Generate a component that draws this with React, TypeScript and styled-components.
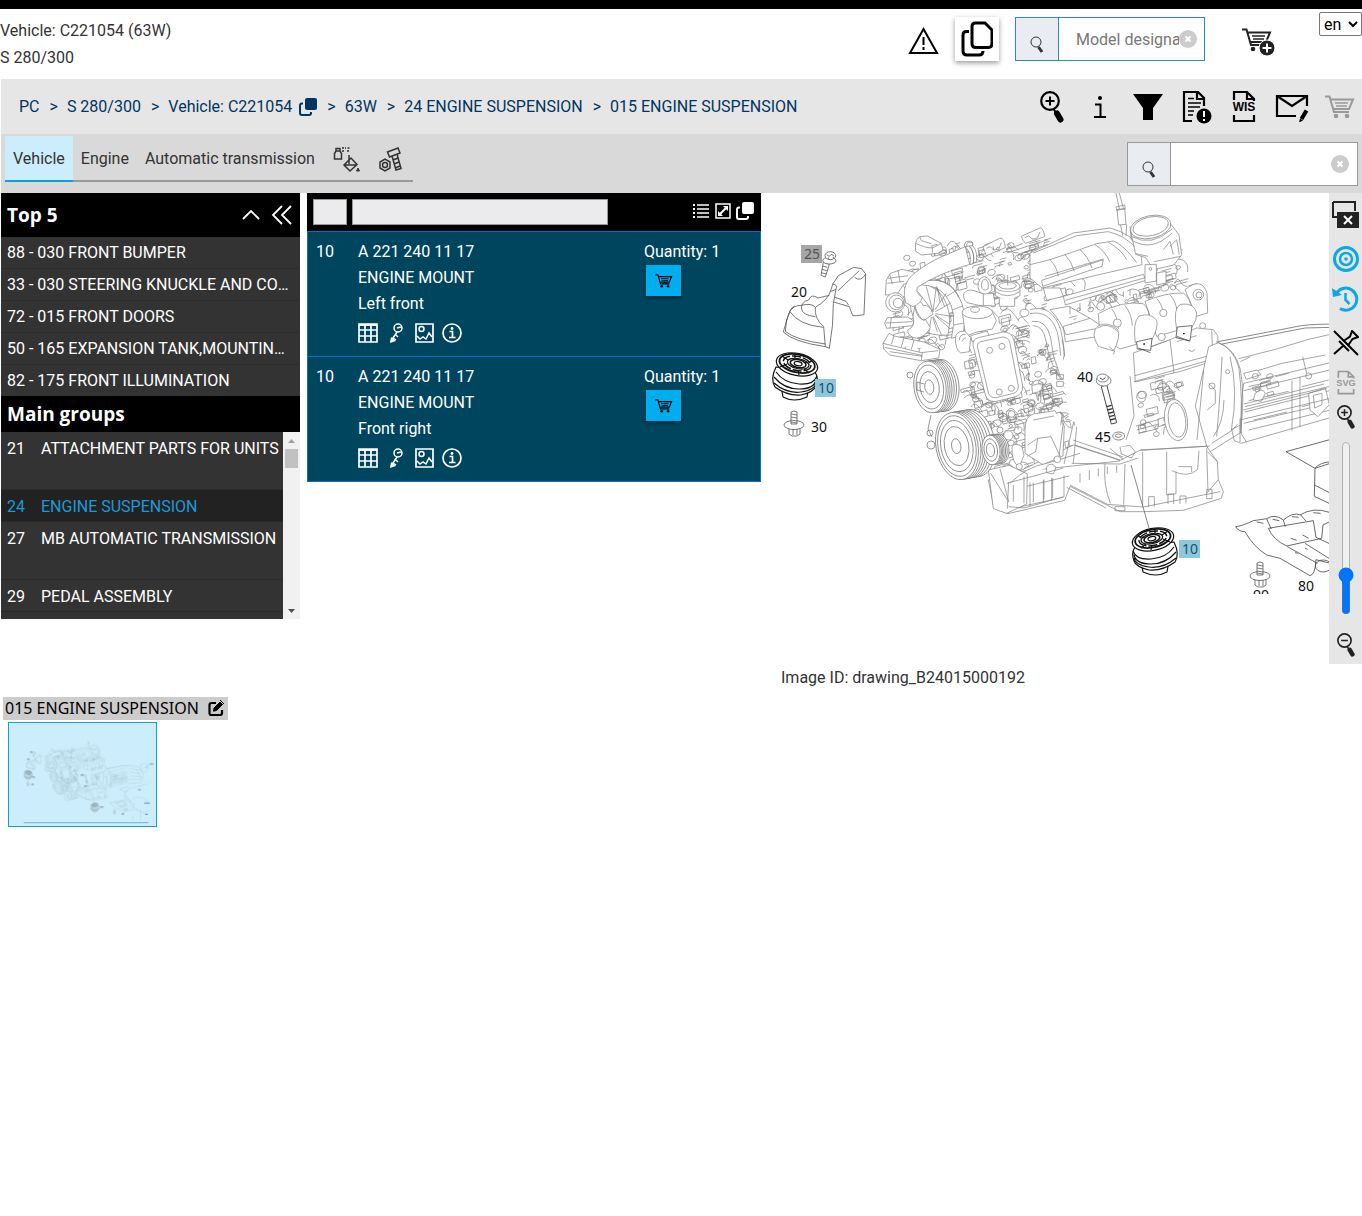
import React from "react";
import styled, { createGlobalStyle } from "styled-components";

const GlobalStyle = createGlobalStyle`
  *, *::before, *::after { box-sizing: border-box; }
  body {
    margin: 0;
    background: #fff;
    color: #333;
    font: 16px/26px Roboto, "Liberation Sans", sans-serif;
  }
  button, input, select { font: inherit; color: inherit; }
  button { padding: 0; border: 0; background: none; cursor: pointer; }
  svg { display: block; flex: none; }
`;

/* ---------- layout pieces ---------- */

const TopStrip = styled.div`
  height: 9px;
  background: #000;
`;

const Header = styled.header`
  display: flex;
  align-items: flex-start;
  height: 70px;
`;

const VehicleInfo = styled.div`
  flex: 1;
  padding-top: 8px;
  line-height: 27px;
  white-space: nowrap;
`;

const HeaderTools = styled.div`
  display: flex;
  align-items: center;
  gap: 16px;
  height: 60px;
`;

const IconButton = styled.button`
  display: flex;
  align-items: center;
  justify-content: center;
  width: 32px;
  height: 32px;
  color: #000;
`;

const RaisedButton = styled(IconButton)`
  width: 44px;
  height: 44px;
  background: #fff;
  box-shadow: 0 2px 5px rgba(0, 0, 0, 0.4);
`;

const WarningButton = styled(IconButton)`
  align-items: flex-end;
`;

const CartAdd = styled(IconButton)`
  align-items: flex-end;
  height: 36px;
  margin: 0 44px 0 22px;
  color: #222;
`;

const MutedButton = styled(IconButton)`
  color: #999;
`;

const Language = styled.select`
  width: 43px;
  height: 24px;
  margin-top: 3px;
  padding: 0;
  border: 1px solid #767676;
  border-radius: 2px;
  background: #fff;
  color: #000;
`;

const SearchBox = styled.form<{ $accent?: boolean; $wide?: boolean }>`
  display: flex;
  align-items: center;
  width: ${(p) => (p.$wide ? 231 : 190)}px;
  height: 44px;
  padding-right: ${(p) => (p.$wide ? 8 : 7)}px;
  border: 1px solid ${(p) => (p.$accent ? "#2a8fa9" : "#999")};
  background: #fff;
  button[type="submit"] {
    display: flex;
    align-items: flex-end;
    justify-content: center;
    flex: none;
    width: 43px;
    height: 100%;
    padding-bottom: 6px;
    border-right: 1px solid ${(p) => (p.$accent ? "#2a8fa9" : "#999")};
    background: #e9ecf1;
  }
  input {
    flex: 1;
    min-width: 0;
    height: 100%;
    padding: 0 0 0 17px;
    border: 0;
    outline: 0;
    background: none;
  }
  input::placeholder { color: #777; opacity: 1; }
`;

const CrumbBar = styled.nav`
  display: flex;
  align-items: center;
  height: 55px;
  margin-left: 1px;
  padding: 0 6px 0 18px;
  background: #e6e6e6;
`;

const Crumbs = styled.ol`
  display: flex;
  flex: 1;
  align-items: center;
  margin: 0;
  padding: 0;
  list-style: none;
  white-space: nowrap;
  color: #00355f;
  li { display: flex; align-items: center; gap: 7px; }
  li + li::before { content: ">"; margin: 0 2px 0 10px; }
  a { color: inherit; text-decoration: none; }
  button { color: inherit; }
`;

const CrumbTools = styled.div`
  display: flex;
  gap: 16px;
`;

const TabBar = styled.div`
  display: flex;
  align-items: flex-start;
  justify-content: space-between;
  height: 59px;
  margin-left: 1px;
  padding: 2px 4px 0;
  background: #d9d9d9;
`;

const Tabs = styled.div`
  display: flex;
  height: 46px;
`;

const Tab = styled.button<{ $active?: boolean; $icon?: boolean }>`
  height: 46px;
  padding: ${(p) => (p.$icon ? "4px 9px 0" : "2px 8px 0")};
  color: #333;
  border-bottom: 2px solid ${(p) => (p.$active ? "#0ba1dd" : "#999")};
  background: ${(p) => (p.$active ? "#ccedfb" : "transparent")};
`;

const TabSearch = styled.div`
  padding-top: 6px;
`;

const Workspace = styled.main`
  display: grid;
  grid-template-columns: minmax(0, 299fr) 7px minmax(0, 454fr) 1px minmax(0, 600fr);
  align-items: start;
  margin-left: 1px;
`;

const Spacer = styled.span``;

const Sidebar = styled.aside`
  background: #333;
  color: #fff;
`;

const SideHeading = styled.div<{ $tall?: boolean }>`
  display: flex;
  align-items: center;
  height: ${(p) => (p.$tall ? 44 : 36)}px;
  padding: 0 3px 0 6px;
  background: #000;
  h2 {
    flex: 1;
    margin: 0;
    font: bold 19px/36px "Open Sans", "Noto Sans", sans-serif;
  }
  button { color: #fff; width: 31px; height: 32px; }
`;

const TopList = styled.ul`
  margin: 0;
  padding: 0;
  list-style: none;
  li { border-bottom: 1px solid #2e2e2e; }
  li:last-child { border: 0; }
  a {
    display: block;
    padding: 0 6px;
    overflow: hidden;
    color: inherit;
    line-height: 31px;
    text-decoration: none;
    text-overflow: ellipsis;
    white-space: nowrap;
  }
`;

const GroupScroll = styled.div`
  display: flex;
  height: 187px;
`;

const GroupList = styled.ul`
  flex: 1;
  margin: 0;
  padding: 0;
  overflow: hidden;
  list-style: none;
`;

const GroupRow = styled.li<{ $tall?: boolean; $active?: boolean }>`
  height: ${(p) => (p.$tall ? 58 : 32)}px;
  border-bottom: 1px solid #2b2b2b;
  background: ${(p) => (p.$active ? "#222" : "#333")};
  color: ${(p) => (p.$active ? "#1d9ad6" : "#fff")};
  a {
    display: grid;
    grid-template-columns: 34px 1fr;
    padding: 0 0 0 6px;
    color: inherit;
    line-height: 33px;
    text-decoration: none;
    white-space: nowrap;
  }
`;

const ScrollTrack = styled.div`
  display: flex;
  flex-direction: column;
  align-items: center;
  justify-content: space-between;
  width: 17px;
  background: #f1f1f1;
  div { display: flex; flex-direction: column; align-items: center; }
`;

const ScrollThumb = styled.span`
  width: 13px;
  height: 19px;
  background: #c1c1c1;
`;

const Parts = styled.section``;

const PartsHeader = styled.div`
  display: flex;
  align-items: center;
  gap: 5px;
  height: 38px;
  padding: 0 7px 2px 6px;
  background: #000;
`;

const FilterInput = styled.input<{ $grow?: boolean }>`
  width: ${(p) => (p.$grow ? "auto" : "34px")};
  flex: ${(p) => (p.$grow ? "0 1 256px" : "none")};
  min-width: 0;
  height: 26px;
  margin-top: 2px;
  border: 1px solid #999;
  background: #ebebed;
`;

const PartsTools = styled.div`
  display: flex;
  gap: 3px;
  margin-left: auto;
  button { width: 19px; height: 20px; color: #fff; }
`;

const PartCard = styled.article`
  display: grid;
  grid-template-columns: 42px 1fr 116px;
  min-height: 126px;
  padding: 7px 0 0 8px;
  border: 1px solid #0a6ccb;
  background: #00455e;
  color: #fff;
  & + & { margin-top: -1px; }
  p { margin: 0; line-height: 26px; }
`;

const PartIcons = styled.div`
  display: flex;
  gap: 8px;
  padding-top: 5px;
  button { width: 20px; height: 22px; color: #fff; }
`;

const AddToCart = styled(IconButton)`
  width: 35px;
  height: 31px;
  margin-left: 2px;
  background: #00adef;
  box-shadow: 0 2px 4px rgba(0, 0, 0, 0.4);
`;

const Viewer = styled.section`
  display: grid;
  grid-template-columns: minmax(0, 1fr) 33px;
`;

const DrawingArea = styled.div`
  svg { width: 100%; height: auto; }
`;

const ViewerTools = styled.div`
  display: flex;
  flex-direction: column;
  align-items: center;
  height: 471px;
  background: #e6e6e6;
  & > * { flex: none; }
  input {
    width: 16px;
    height: 174px;
    margin: 4px 0 0;
    writing-mode: vertical-lr;
    direction: rtl;
  }
`;

const ToolButton = styled(IconButton)<{ $h: number; $color?: string; $low?: boolean }>`
  height: ${(p) => p.$h}px;
  padding-top: ${(p) => (p.$low ? 12 : 0)}px;
  color: ${(p) => p.$color || "#222"};
`;

const ImageId = styled.div`
  grid-column: 1 / -1;
  padding-left: 19px;
  line-height: 28px;
`;

const Sheets = styled.section`
  padding: 5px 0 0 3px;
`;

const SheetTitle = styled.div`
  display: flex;
  align-items: center;
  gap: 8px;
  width: max-content;
  height: 23px;
  padding: 0 3px 0 2px;
  background: #ccc;
  color: #000;
  font: 16px/23px "Noto Sans", "Open Sans", sans-serif;
  button { width: 18px; height: 20px; }
`;

const SheetThumb = styled.button`
  display: block;
  width: 149px;
  height: 105px;
  margin: 2px 0 0 5px;
  border: 1px solid #0ba1dd;
  background: #ccedfb;
  svg { width: 100%; height: 100%; mix-blend-mode: multiply; }
`;

/* ---------- icons ---------- */

type IconProps = { w?: number; h?: number; box?: string; children?: React.ReactNode };
const Icon = ({ w = 24, h = w, box = `0 0 ${w} ${h}`, children }: IconProps) => (
  <svg width={w} height={h} viewBox={box} fill="none" stroke="currentColor" strokeWidth="2" aria-hidden="true">
    {children}
  </svg>
);

const Magnifier = ({ w, h, sign }: { w: number; h: number; sign?: "+" | "-" }) => (
  <Icon w={w} h={h} box="0 0 24 32">
    <circle cx="10" cy="10" r="8.800" strokeWidth="2.200" />
    {sign && <path d={sign === "+" ? "M5.500 10h9M10 5.500v9" : "M5.500 10h9"} />}
    <path d="M13.500 18l2 3" strokeWidth="2" />
    <path d="M17 22.500l3.500 6" strokeWidth="6" strokeLinecap="round" />
  </Icon>
);

const SmallGlass = () => (
  <Icon w={14} h={18}>
    <circle cx="6" cy="6" r="5" strokeWidth="1" stroke="#333" />
    <path d="M8.500 11l3.500 5" strokeWidth="3" stroke="#333" />
  </Icon>
);

const ClearIcon = () => (
  <Icon w={18}>
    <circle cx="9" cy="9" r="9" fill="#ccc" stroke="none" />
    <path d="M6.500 6.500l5 5M11.500 6.500l-5 5" stroke="#fff" />
  </Icon>
);

const WarningIcon = () => (
  <Icon w={31} h={29}>
    <path d="M15.500 3L29 27H2z" />
    <path d="M15.500 11v8M15.500 21v3" />
  </Icon>
);

const CopyOutline = () => (
  <Icon w={32} h={36}>
    <path d="M11 5.500Q11 2 14.500 2H24l7 7v13.500q0 4-4 4H15q-4 0-4-4z" strokeWidth="3" />
    <path d="M8 10.500H5.500Q2 10.500 2 14v16q0 4 4 4h12q4 0 4-4" strokeWidth="3" />
  </Icon>
);

const CopySolid = ({ size = 18 }: { size?: number }) => (
  <Icon w={size} box="0 0 18 18">
    <rect x="6" y="0" width="12" height="12" rx="2" fill="currentColor" stroke="none" />
    <path d="M4 5.500H3q-2 0-2 2V15q0 2 2 2h7q2 0 2-2v-1" />
  </Icon>
);

const CartShape = () => (
  <>
    <path d="M0 1.500h4.500L9 17h15" />
    <path d="M5.500 4.500H28L24 14H8.500" />
    <path d="M10 8h13M11 11h11" strokeWidth="1.500" />
    <circle cx="11" cy="21" r="2.300" fill="currentColor" stroke="none" />
    <circle cx="22" cy="21" r="2.300" fill="currentColor" stroke="none" />
  </>
);

const CartIcon = ({ w = 30, h = 24 }: { w?: number; h?: number }) => (
  <Icon w={w} h={h} box="0 0 30 24"><CartShape /></Icon>
);

const CartPlus = () => (
  <Icon w={34} h={29}>
    <CartShape />
    <circle cx="25" cy="20" r="8" fill="currentColor" stroke="#fff" strokeWidth="1" />
    <path d="M25 15.500v9M20.500 20h9" stroke="#fff" />
  </Icon>
);

const InfoLetter = () => (
  <Icon w={14} h={24}>
    <circle cx="7" cy="3" r="2" fill="currentColor" stroke="none" />
    <path d="M2 9.500h5.500V22M1 22h12" />
  </Icon>
);

const FunnelIcon = () => (
  <Icon w={30} h={26}>
    <path d="M0 0h30L20 14v12H10V14z" fill="currentColor" stroke="none" />
  </Icon>
);

const DocAlert = () => (
  <Icon w={32} h={34}>
    <path d="M12 31H4V2h14l6 6v8M17 2v7h7" strokeWidth="2.200" />
    <path d="M8 8.500h6M8 13h13M8 17h12M8 21h6M8 25h5" strokeWidth="1.700" />
    <circle cx="24" cy="26" r="7.500" fill="currentColor" stroke="none" />
    <path d="M24 21v6M24 29v2" stroke="#fff" />
  </Icon>
);

const FileLabel = ({ w, h, label }: { w: number; h: number; label: string }) => (
  <Icon w={w} h={h} box="0 0 28 34">
    <path d="M4 10V2h13l7 7v2M17 2v7h7M4 25v6h20v-6" strokeWidth="2.200" />
    <text x="14" y="21" textAnchor="middle" fill="currentColor" stroke="none"
      fontFamily="Liberation Sans, sans-serif" fontWeight="bold" fontSize="12">{label}</text>
  </Icon>
);

const MailEdit = () => (
  <Icon w={34} h={30}>
    <path d="M21 24H2V4h30v10M2 4l15 10L32 4" strokeWidth="2.200" />
    <path d="M26.500 27l5-8.500" strokeWidth="4" />
    <path d="M24 30.500l1-4 3 2z" fill="currentColor" stroke="none" />
  </Icon>
);

const PaintIcon = () => (
  <Icon w={28} h={28}>
    <path d="M2.500 7.500L4 5h4l1.500 2.500V13h-7zM4 5V2.500h4V5" strokeWidth="1.500" />
    <path d="M10 2h4M10 5h3M15.500 2h2M15 5h2" strokeDasharray="2 1" strokeWidth="1.500" />
    <path d="M12 19l7-7 6 6.500-7 6.500zM17 9v9M12 19h13" strokeWidth="1.500" />
    <path d="M26 22l1.500 3h-3z" fill="currentColor" strokeWidth="1" />
  </Icon>
);

const BoltsIcon = () => (
  <Icon w={26} h={28}>
    <path d="M2 16l5-3 5 3v6l-5 3-5-3z" strokeWidth="1.500" />
    <circle cx="7" cy="19" r="2.500" strokeWidth="1.500" />
    <path d="M9.500 6L20 2l2 5-10.500 4zM14 10l4 14 5-1.500L19 8M15 14l5-2M16 18l5-2M17 22l5-2" strokeWidth="1.500" />
  </Icon>
);

const ChevronUp = () => <Icon w={18} h={12}><path d="M1 10l8-8 8 8" strokeWidth="1.800" /></Icon>;
const DoubleLeft = () => <Icon w={22} h={20}><path d="M11 1l-9 9 9 9M20 1l-9 9 9 9" strokeWidth="1.800" /></Icon>;

const ListIcon = () => (
  <Icon w={17} h={16}>
    <path d="M5 2h12M5 6h12M5 10h12M5 14h12" strokeWidth="1.500" />
    <path d="M1 2h2M1 6h2M1 10h2M1 14h2" />
  </Icon>
);

const ExpandIcon = () => (
  <Icon w={16}>
    <path d="M1 1h14v14H1z" strokeWidth="1.500" />
    <path d="M5 11l6-6" />
    <path d="M8 3h5v5zM8 13H3V8z" fill="currentColor" stroke="none" />
  </Icon>
);

const GridIcon = () => (
  <Icon w={20}>
    <path d="M1 1h18v18H1zM7 1v18M13 1v18M1 7h18M1 13h18" strokeWidth="1.700" />
    <path d="M1 2h18" />
  </Icon>
);

const KeyIcon = () => (
  <Icon w={14} h={20}>
    <circle cx="9" cy="5" r="4" strokeWidth="1.500" />
    <path d="M8 5l4-1M8 9l-6 9M7 12l2 2M4 15l3 2" strokeWidth="1.500" />
    <path d="M2 14l5 4-6 2z" fill="currentColor" stroke="none" />
  </Icon>
);

const PictureIcon = () => (
  <Icon w={19} h={20}>
    <path d="M1 1h17v18H1z" strokeWidth="1.700" />
    <circle cx="6.500" cy="6" r="2.500" strokeWidth="1.500" />
    <path d="M2 13l3 3 3-2 3 2 3-6 3 4" strokeWidth="1.500" />
  </Icon>
);

const InfoCircle = () => (
  <Icon w={20}>
    <circle cx="10" cy="10" r="9" strokeWidth="1.700" />
    <path d="M7.500 8.500H10.500V14.500M7 14.500h6.500" strokeWidth="1.700" />
    <circle cx="10" cy="5.500" r="1.400" fill="currentColor" stroke="none" />
  </Icon>
);

const CloseWindow = () => (
  <Icon w={28} h={28}>
    <path d="M1 1h22v9M1 1v15h4" />
    <path d="M5 11h22v16H5z" fill="currentColor" stroke="none" />
    <path d="M12 15l8 8M20 15l-8 8" stroke="#fff" />
  </Icon>
);

const TargetIcon = () => (
  <Icon w={26}>
    <circle cx="13" cy="13" r="11.500" strokeWidth="3" />
    <circle cx="13" cy="13" r="6" strokeWidth="2.500" />
    <circle cx="13" cy="13" r="1.800" fill="currentColor" stroke="none" />
  </Icon>
);

const HistoryIcon = () => (
  <Icon w={27} h={26}>
    <path d="M5 6.500A11 11 0 1 1 8 22.500" strokeWidth="3" />
    <path d="M0 2l1 9 9-2z" fill="currentColor" stroke="none" />
    <path d="M13.500 7v7l4 4" strokeWidth="2.500" />
  </Icon>
);

const UnpinIcon = () => (
  <Icon w={26}>
    <path d="M1 1l24 24" />
    <path d="M1 24l9-8M6 11l10 10M10.500 11l6.500-4.500L19 1l6 6-5.500 2-4.500 6.500" />
  </Icon>
);

const EditIcon = () => (
  <Icon w={16} h={17}>
    <path d="M8 3H3.500Q1.500 3 1.500 5v8q0 2 2 2H12q2 0 2-2v-3" strokeWidth="2.200" />
    <path d="M6 8l6-6 2.500 2.500-6 6-3 .700z" fill="currentColor" strokeWidth="1" />
    <path d="M12 0l4 4" strokeWidth="1" />
  </Icon>
);

const Triangle = ({ down }: { down?: boolean }) => (
  <svg width="17" height="17" viewBox="0 0 17 17" aria-hidden="true">
    <path d={down ? "M5 7h7l-3.500 4z" : "M5 11h7L8.500 7z"} fill={down ? "#505050" : "#a3a3a3"} />
  </svg>
);

/* ---------- exploded drawing ---------- */

type Pt = [number, number];

// Repeatable pseudo-random sequence, so the casting details are always the same.
const sequence = (seed: number) => () => {
  seed = (seed * 1664525 + 1013904223) % 4294967296;
  return seed / 4294967296;
};

const inside = (x: number, y: number, poly: Pt[]) => {
  let hit = false;
  for (let i = 0, j = poly.length - 1; i < poly.length; j = i++) {
    const [xi, yi] = poly[i];
    const [xj, yj] = poly[j];
    if (yi > y !== yj > y && x < ((xj - xi) * (y - yi)) / (yj - yi) + xi) hit = !hit;
  }
  return hit;
};

// Small hoses, bosses, bolts and ribs that fill a region of the engine block.
const castingDetail = (poly: Pt[], count: number, seed: number) => {
  const rnd = sequence(seed);
  const xs = poly.map((p) => p[0]);
  const ys = poly.map((p) => p[1]);
  const x0 = Math.min(...xs), x1 = Math.max(...xs), y0 = Math.min(...ys), y1 = Math.max(...ys);
  let d = "";
  let n = 0;
  while (n < count) {
    const x = x0 + rnd() * (x1 - x0);
    const y = y0 + rnd() * (y1 - y0);
    if (!inside(x, y, poly)) continue;
    n++;
    const a = 3 + rnd() * 9;
    const b = 2 + rnd() * 6;
    const kind = rnd();
    const f = (v: number) => v.toFixed(1);
    if (kind < 0.3) {
      const r = 1.5 + rnd() * 3;
      d += `M${f(x - r)} ${f(y)}a${f(r)} ${f(r * 0.8)} -15 1 0 ${f(r * 2)} 0a${f(r)} ${f(r * 0.8)} -15 1 0 ${f(-r * 2)} 0`;
    } else if (kind < 0.55) {
      d += `M${f(x)} ${f(y)}l${f(a)} ${f(-a * 0.27)}l1 ${f(b)}l${f(-a)} ${f(a * 0.27)}z`;
    } else if (kind < 0.8) {
      d += `M${f(x)} ${f(y)}q${f(a / 2)} ${f(-b)} ${f(a)} ${f(-b / 3)}t${f(b)} ${f(a)}`;
    } else {
      d += `M${f(x)} ${f(y)}l${f(a * 1.3)} ${f(-a * 0.35)}m-1 3l${f(-a)} ${f(a * 0.27)}l-1 ${f(b)}`;
    }
  }
  return d;
};

const upperLeft = castingDetail([[888, 285], [902, 260], [940, 238], [1000, 242], [1045, 240], [1075, 270], [1072, 290], [1065, 330], [1045, 345], [1010, 345], [985, 325], [960, 350], [892, 345]], 210, 7);
const middle = castingDetail([[960, 350], [985, 330], [1035, 325], [1055, 350], [1060, 430], [1030, 430], [1000, 440], [975, 415], [958, 395]], 190, 21);
const lower = castingDetail([[985, 425], [1060, 395], [1072, 430], [1078, 462], [1050, 475], [1010, 492], [992, 490]], 60, 44);
const rightHead = castingDetail([[1136, 385], [1175, 372], [1180, 415], [1165, 440], [1136, 430]], 30, 3);
const topDeck = castingDetail([[1065, 305], [1140, 285], [1155, 290], [1155, 298], [1075, 315]], 28, 12);
const throttleDetail = castingDetail([[1140, 262], [1178, 250], [1180, 275], [1190, 288], [1150, 290]], 22, 31);
const gearDetail = castingDetail([[1250, 375], [1270, 372], [1270, 395], [1250, 398]], 8, 15);
const frontCover = castingDetail([[1030, 350], [1048, 345], [1060, 380], [1060, 395], [1030, 400]], 26, 91);

type PulleyProps = { x: number; y: number; rx: number; ry: number; tilt: number; depth: number; rings: number[] };
const Pulley = ({ x, y, rx, ry, tilt, depth, rings }: PulleyProps) => (
  <g transform={`translate(${x} ${y}) rotate(${tilt})`} fill="#fff">
    {[1, 0.8, 0.62, 0.45, 0.3, 0.15, 0].map((k) => (
      <ellipse key={k} cx={depth * k} cy={0} rx={rx} ry={ry} />
    ))}
    {rings.map((k) => (
      <ellipse key={k} cx={-1 + k} cy={0} rx={rx * k} ry={ry * k} />
    ))}
  </g>
);

const RubberMount = ({ x, y, flip }: { x: number; y: number; flip?: boolean }) => (
  <g transform={`translate(${x} ${y}) scale(${flip ? -1 : 1} 1)`} stroke="#111" strokeWidth="1.200" fill="#fff">
    <path d="M-15 16l3 17q11 6 24 0l3-17z" />
    <path d="M-19 3q-6 12-1 20q12 9 26 8q13-3 15-9q3-8-1-14z" />
    <path d="M-21 13q10 12 25 12t17-9M-21 19q13 11 27 9t15-9M-19 8q8 11 23 12t18-8" fill="none" />
    <ellipse cx="2" cy="0" rx="21" ry="11" transform="rotate(12)" />
    <ellipse cx="2" cy="-1" rx="18" ry="9" strokeWidth="1.800" transform="rotate(12)" />
    <ellipse cx="2" cy="-1" rx="14" ry="7" strokeDasharray="9 2" strokeWidth="1.500" transform="rotate(12)" />
    <ellipse cx="3" cy="-1" rx="11" ry="5" transform="rotate(12)" />
    <ellipse cx="3" cy="-1" rx="8" ry="4" strokeWidth="1.600" transform="rotate(12)" />
    <ellipse cx="3" cy="-1" rx="4" ry="2" transform="rotate(12)" />
    <path d="M-13 -8l6 4M14 9l-5-4M17 -3l-7 2M-15 3l7-3M0-11v5M4 11l-1-5" />
  </g>
);

const FlangeBolt = ({ x, y }: { x: number; y: number }) => (
  <g transform={`translate(${x} ${y})`} stroke="#444" fill="#fff">
    <path d="M-5 3v6l3 2h5l3-2V3z" />
    <ellipse cx="0" cy="0" rx="10" ry="4.500" />
    <path d="M-3-1v-12q3-2 6 0V-1zM-3-11l6 1M-3-8l6 1M-3-5l6 1M-3-3l6 1M-1 4v6M3 4v6" />
  </g>
);

const third = "scale(0.33333)";

const DrawingLines = () => (
  <g fill="none" stroke="#808080" strokeWidth="0.700" strokeLinejoin="round">
    {/* engine body */}
    <path d={upperLeft} /><path d={middle} /><path d={lower} />
    <path d={topDeck} /><path d={throttleDetail} />

    {/* left upper part of the engine */}
    <g transform={`translate(878 215) ${third}`} strokeWidth="2.100" fill="#fff">
      <path d="M112 108L113 85q3-15 12-20l25-2 15 9 25 13 5 20-15 10-50 5zM113 85q30 14 50 14l27-14M125 65l5 12 30 9M163 99v14" />
      <path d="M22 240l3-45 12-20 35-12 35 8 10 25-40 12-20 30zM30 190l60-8M28 205l50-6M35 178l8 30M60 165l6 36" />
      <circle cx="52" cy="262" r="29" /><circle cx="55" cy="262" r="22" /><circle cx="60" cy="264" r="14" />
      <path d="M28 308l60-2 20 12-4 14-78 8-6-16zM24 324l80-4M40 308l-4 32" />
      <path d="M130 200q70-20 110 40 30 50 15 120l-35 10q20-80-15-125-30-40-75-30z" />
      <path d="M150 196q70-8 92 52M205 245l35-22M222 285l32-12M228 330l30-6" fill="none" />
      <path d="M100 215q60-20 95 30 30 50 15 115-50 5-85-20-40-50-25-125z" />
      <path d="M165 290l-45-60M165 290l-20-75M165 290l10-75M170 285l35-50M172 290l45-25M172 296l48 8M170 300l45 40M166 304l24 55M160 306l-8 50M186 262l-8-44M200 275l-24-60M212 326l-40-26M178 350l-14-44" />
      <path d="M105 250q25 5 30 22 20-5 30 25l-28 20q-15-10-27-45zM110 275q10 45 32 38l15 25q-15 28-42 32-26-5-26-25 25-10 16-40z" />
      <path d="M262 95l-82 35q-55 28-85 58-24 30-12 75l22 12q25-10 28-28-22-12-15-30 60-40 157-69z" />
      <path d="M262 95q20 20 14 54l10-4q5-34-12-52zM274 93q18 22 12 52l9-5q5-30-11-48z" />
      <path d="M315 95l50-25q15-3 17 28l-15 6-42 18q-6-14-10-27zM325 100l12-5 10 10 15-2 8-20" />
      <path d="M430 64l58-26q8 2 12 27l-58 20q-8-8-12-21zM440 68l12-5 12 10 14-4 8-18" />
      <path d="M384 104l50-18M386 114l124-40M420 118l90-30M384 100l30-2 8 8" fill="none" />
      <path d="M15 385l18-30 15 8 90 18 48 22-4 26-52 8-95-17-18-18zM15 385l115 28 50-6M48 363l-8 25M78 368l-8 28M108 375l-8 28M35 410l98 14M20 397l112 24M133 412l-3 24" />
      <path d="M300 215q0-28 20-30 20 4 22 40l-18 16q-22-5-24-26zM310 212q2-20 12-20 12 6 8 30-18 10-20-10z" />
      <path d="M258 235q10-14 30-8l30 10 28-2 6 38-50-2-35-8q-14-12-9-28zM316 236v34" />
      <path d="M352 214v28q36 24 74 0v-28z" /><ellipse cx="389" cy="214" rx="37" ry="16" />
      <ellipse cx="389" cy="212" rx="26" ry="10" /><path d="M389 212v-32M352 230q36 24 74 0M364 250v24h46v-24" />
      <path d="M253 292l10 72 30-12 50-10 12-25-12-27z" /><ellipse cx="298" cy="292" rx="46" ry="19" />
      <ellipse cx="291" cy="284" rx="13" ry="8" /><path d="M278 362l50-14 6 18-52 14z" />
      <path d="M285 390q0-18 16-22l74-17q26 0 32 22l27 140q0 26-22 32l-60 15q-24 0-30-20z" />
      <path d="M298 394q0-12 10-14l66-14q16 0 21 15l26 132q0 18-15 22l-52 13q-18 0-22-12z" />
      <circle cx="335" cy="406" r="9" /><circle cx="372" cy="394" r="9" /><circle cx="364" cy="531" r="9" /><circle cx="400" cy="520" r="9" />
      <path d="M232 372q0-24 28-24l18 20-4 42-26 4q-16-12-16-42zM244 376q0-18 18-18M252 380q2-10 12-12" />
    </g>

    {/* intake, throttle and coils */}
    <g transform={`translate(1030 193) ${third}`} strokeWidth="2.100" fill="#fff">
      <path d="M0 180l130-60 110-15q65 18 92 60l4 50-300 70-36-30z" />
      <path d="M10 180l130-52 95-12q55 14 85 52M0 215l60-15 60-20 80-28 50-8q30 10 70 65M60 200q20 20 25 50M105 185q20 20 28 50M150 170q24 20 36 55M195 155q30 18 45 52M235 148q40 22 55 52M35 262l185-62-4 20-178 60zM45 250l175-52" fill="none" />
      <path d="M40 285h50l10 25-50 12zM100 310l240-66 8 18-242 74zM106 322l240-68" />
      <path d="M258 0l10 48M268 0l12 46M261 50l23-4 4 48-22 2zM258 42l26-6 2 12-26 4zM272 96l6 32M290 94l-2 34" />
      <path d="M303 118l14 66 30 10 24 36 60-14 24-30-8-60-22-30z" />
      <path d="M306 142q60 36 120-22M304 130q60 34 122-22M400 170l20-25 10 40M420 160l20-20 8 45M372 206l80-16M345 215v55l34-6v-50zM380 240l28-5v35l-28 6zM318 182l36 8M300 100l4 42" />
      <ellipse cx="362" cy="102" rx="61" ry="34" transform="rotate(-12 362 102)" />
      <ellipse cx="362" cy="100" rx="54" ry="28" transform="rotate(-12 362 100)" />
      <circle cx="361" cy="228" r="4" />
      <path d="M465 290q50-40 66 10l2 60-34 10z" /><circle cx="505" cy="305" r="16" /><circle cx="507" cy="306" r="9" />
      <path d="M205 362q70-40 135-30 20 16 20 60l-20 56-70 20-60-40zM345 325q60-26 115-25 20 14 24 45l-34 65-70 20zM245 348q18 20 20 60M285 338q20 24 22 60M380 316q18 20 22 54M420 305q18 20 22 52" />
      <path d="M100 400l80-24 30 20-14 36-90 14zM60 350q30 30 48 75l90-18M60 350l56-10 64 36" />
      <path d="M0 350q66-18 92 60 10 40 12 80v110L0 600z" stroke="none" />
      <path d="M0 350q66-18 92 60 10 40 12 80M0 362q60-12 82 56 8 36 10 70M6 385q44-6 56 50 6 40 10 60 12 30 20 60M10 398q30 0 38 46 6 40 18 66 10 20 18 50M96 440q10 40 4 60" fill="none" />
      <circle cx="38" cy="478" r="10" /><circle cx="72" cy="530" r="10" /><path d="M80 545h20v14H80zM80 566h20v14H80z" />
      <path d="M310 480l110-40 80-35 50 5 14 20-2 70-110 35-136 32zM312 566l252-72M420 440l12 100M545 412l4 90M314 548l246-66" />
      <path d="M340 470l70-26M440 446l60-18M475 470q10 10 20 0" />
      <path d="M205 460q-26-40 0-62 32-14 58 12 10 20-12 64zM238 462l16 12-4 10M203 405q30-20 60 10" />
      <path d="M316 450q-8-60 10-80 34-14 54 12 6 20-16 62zM440 410q-12-66 12-76 40-6 48 26 2 20-14 42z" />
      <path d="M320 446l46-10-4 36-40-4zM442 402l44-4-6 46-42-10zM325 465l36 14M440 430l38 14" stroke="#333" />
      <path d="M340 453h5M459 422h5" stroke="#111" strokeWidth="4" />
      <circle cx="262" cy="390" r="12" /><circle cx="395" cy="432" r="11" /><circle cx="212" cy="340" r="12" /><circle cx="400" cy="360" r="11" /><circle cx="518" cy="398" r="9" />
      <path d="M120 340v24M150 330v24M180 322v28M230 310l28-6v22l-28 6zM280 295v18M300 290v18" fill="none" />
    </g>
    <path d={frontCover} />
    <path d={rightHead} />

    {/* front housing of the gearbox */}
    <g transform={`translate(1062 190) ${third}`} strokeWidth="2.100">
      <path fill="#fff" d="M440 470l30-12q50 20 65 80 15 80 0 190l-95 60-40-140z" />
      <path d="M462 455q50 15 68 75 14 100 4 190M480 500q-4 100-16 240M504 500q26 100 4 220M545 580q-10 60-6 150M440 580l20 20v40l-24 20M425 540q-10 110-20 210" />
      <path d="M468 455l250-48q45-6 110-4M480 462l250-48 80-2" stroke="#555" />
      <path d="M530 506l110-28 100-30 70-16M535 515l30-15M560 550l100-30 130-25M545 580l260-62M545 602l275-66M548 650l260-62M548 666l270-68M545 700l275-64M560 720l270-66M690 572v150M714 560v150M722 500l12 50" />
      <path d="M560 590l60-14M640 560l40-10M560 632l120-28M720 590l80-20M575 690l100-24M720 650l40-10" />
      <ellipse cx="342" cy="690" rx="34" ry="62" transform="rotate(-8 342 690)" fill="#fff" />
      <ellipse cx="345" cy="690" rx="26" ry="52" transform="rotate(-8 345 690)" />
      <circle cx="497" cy="545" r="6" /><circle cx="450" cy="588" r="9" /><circle cx="740" cy="558" r="9" />
      <ellipse cx="238" cy="620" rx="14" ry="16" /><ellipse cx="300" cy="590" rx="14" ry="9" transform="rotate(-20 300 590)" /><ellipse cx="348" cy="585" rx="12" ry="8" transform="rotate(-20 348 585)" />
      <path d="M545 550l40-10 12 14-44 14zM580 610q20-20 30 0l-12 24-24-4zM740 610l50-16 12 50-34 36-24-20zM754 616l26-6v34l-22 10z" fill="#fff" />
    </g>
    <path d={gearDetail} />

    {/* oil pan */}
    <g transform={`translate(880 400) ${third}`} strokeWidth="2.100">
      <path fill="#fff" d="M325 240l90-25 165-80 140 46 60-30 200-12 32 46 3 54 15 36-6 20-114 36-120 4h-70l-150-76-16 42-170 40-42-18z" />
      <path d="M585 135l135 45M575 190l145 2 55-18M415 215l305-32M330 250q40-10 85-35M375 270v60M422 252v72M450 247v72M490 240v68M515 234v68M330 262l48 12 190-46M345 310l34 20 170-38M570 255l112 58 108 8 230-46M560 262l118 62M675 192q-6 60 16 118M735 192l-4 122M788 155v162M860 155v130l28-4v-66M875 212q50 24 78-4l4-56M895 200h40v16M980 145l4 130M1012 185l-30-30M1014 240l-34 40M780 150l210-12" />
      <path d="M600 220v28M628 210v30M655 205v24M682 200v22M710 196v22M806 322v-32h17v30M864 312v-30h17v30M900 312v-24h18v22M705 320h30v12h-30zM980 268h16v28h-16z" />
      <path d="M720 140l30-4 16 20-12 18-30-12zM690 145l40 34M770 90l66-18M768 78l70-20M775 100l60-14M995 130l60-38 18-20M1000 110q30-40 32-110" />
      <path d="M1055 88l25-12v-20M1055 88l8 34 20 8 264-76M1080 76v50M1080 95l20 32M1080 60l267-64M1090 30l250-64M1092 12l240-60" />
    </g>

    {/* lower front block beside the pulleys */}
    <g transform={`translate(900 370) ${third}`} strokeWidth="2.100" fill="#fff">
      <path d="M375 180q0-40 24-48l66-10 28 46-4 90-60 26-54-34z" />
      <path d="M383 225l30-20 40-5 28 60M413 205l-6 40-26 14M400 150l62-12M470 130q10-8 16 6l-4 30" />
      <path d="M265 300l62-14 55 26-2 90-60 28-40-14zM272 310l50 80M300 296l26 100M330 340q50-50 110-60l100-30M326 336l-4 80" />
      <path d="M336 230q10-14 30 0l6 26-14 34q-24-10-22-60zM440 290q14-16 28 2l-8 20-20-4z" />
      <ellipse cx="506" cy="144" rx="18" ry="10" transform="rotate(-20 506 144)" /><ellipse cx="506" cy="144" rx="10" ry="5" transform="rotate(-20 506 144)" />
      <path d="M490 158l-14 110M522 152l-30 130M530 170l-10 110" />
      <path d="M340 395v-50M372 400v-80M400 396v-58M432 388v-60M458 384v-60M492 380v-64M320 340l170-46M326 410l46 4 120-34" fill="none" />
      <circle cx="335" cy="132" r="10" /><circle cx="472" cy="268" r="10" /><circle cx="358" cy="290" r="9" /><circle cx="325" cy="196" r="14" /><circle cx="300" cy="180" r="9" />
    </g>
    <path d="M1131 465l18 63" stroke="#555" />

    <path d="M1066 357h62l6 18v68l-14 4-51-28-4-30z" fill="#fff" stroke="none" />
    <path d="M1073 440l50 17M1130 376l4 40-8 24" />

    <g stroke="#6c6c6c">
      <Pulley x={930} y={387} rx={16} ry={26} tilt={-8} depth={13} rings={[0.85, 0.6, 0.28]} />
      <circle cx="910" cy="375" r="3" /><path d="M924 384l-7-2v8l7 2" />
      <Pulley x={957} y={446} rx={21} ry={34} tilt={-10} depth={17} rings={[0.9, 0.76, 0.58, 0.22]} />
      <circle cx="931" cy="445" r="4" /><circle cx="930" cy="433" r="3" /><path d="M931 415l-3 14 4 8" />
      <Pulley x={991} y={450} rx={9} ry={15} tilt={-8} depth={9} rings={[0.75, 0.45]} />
    </g>

    {/* shield 80 */}
    <g transform={`translate(880 400) ${third}`} strokeWidth="2.400" stroke="#444">
      <path fill="#fff" d="M1067 380q20-2 53-18l40-6q25-16 50 4 30-25 50-15 40-25 88-8l110 60-40 110-110-28q-2 45-18 48l-90-52-40-10q-40-25-65-70-20 0-28-15z" />
      <path d="M1165 385l135-23 8 50 60 28M1165 385q15 35 55 53l105-23 4-40 20-10M1275 430l80 50M1160 357l14 30M1210 360l6 20M1262 345l16 18M1222 440l90 50M1232 415l18 6M1268 405l18 10M1130 366l20 4M1178 358l20 4M1236 350l20 2M1300 338l22 2M1245 458l8 2M1275 444l8 4" />
      <ellipse cx="1330" cy="498" rx="24" ry="18" />
      <path d="M1360 116l-142 39 87 50 55-18M1305 205l-2 84 55 26M1303 255l55 28M1305 205q14-18 50-20" />
    </g>

    {/* parts to the right of the shield, further along the sheet */}
    <g stroke="#555">
      <path d="M1329 324l60 8 28 40-10 45-78 8M1340 340l66 12M1340 360l70 10M1345 380l64 6M1340 400l66 0M1400 320l24-8 16 20-10 30-24-8zM1430 330l30-10M1410 345q20-20 40-4M1380 345l20 50M1329 453l110-30M1340 520l40-26 50 10 14 30M1360 560l60 20 30-16M1400 560v60M1420 520l36 6M1335 500l14 40 44 24M1360 600v24" />
      <path d="M1450 317h20M1420 528h30M1388 456h14M1424 588h16" stroke="#222" strokeWidth="4" />
    </g>

    {/* bracket 20 with its bolt */}
    <g transform={`translate(762 190) ${third}`} strokeWidth="2.400" stroke="#555">
      <path fill="#fff" d="M205 305l8-24 16-24 46-25 24 4 12 16-5 122-22 3h-12l-10-27-50-15z" />
      <path d="M222 298q6-14-10-16M228 302l64-60M278 262q8 8 18 5 9-4 14-14M204 316l48 18 8 12" />
      <path fill="#fff" d="M205 305q-8 25-45 47-10-14-42-6-24 0-34 18-12 30-20 62 30 30 126 44l12 5q13-70 12-135l8-42z" />
      <path d="M160 352q-4 33 25 58l5 60M160 380q-40-4-42-26 2-20 22-24 8-20 28-6l34-8M84 365q26 40 100 47M98 348q-14 4-24 42l-4 34q30 26 120 38" />
      <path fill="#fff" d="M184 216l-7 40 13 5 12-38zM182 228l14 4M180 238l14 4M178 248l14 4" />
      <ellipse cx="202" cy="212" rx="20" ry="10" fill="#fff" /><ellipse cx="205" cy="197" rx="16" ry="12" fill="#fff" />
      <path d="M194 194l8 5 6-6 8 4M200 208v-6M214 206v-6" />
    </g>

    {/* bolt 40 and washer 45 */}
    <g transform={`translate(1062 190) ${third}`} strokeWidth="2.700" stroke="#333" fill="#fff">
      <path d="M118 590l30 112 16-4-30-114z" />
      <path d="M133 650l16-4M136 660l16-4M139 670l16-4M141 680l16-4M144 690l16-4" strokeWidth="4" />
      <ellipse cx="125" cy="572" rx="22" ry="16" stroke="#777" /><ellipse cx="122" cy="564" rx="17" ry="12" stroke="#777" />
      <path d="M114 564l8 5 8-6" />
      <ellipse cx="170" cy="738" rx="18" ry="12" stroke="#777" /><ellipse cx="169" cy="737" rx="9" ry="5" stroke="#777" />
    </g>

    <FlangeBolt x={794} y={425} />
    <FlangeBolt x={1260} y={576} />
    <RubberMount x={795} y={364} />
    <RubberMount x={1155} y={539} flip />
  </g>
);

const DrawingLabel = ({ x, y, n, mark }: { x: number; y: number; n: number; mark?: string }) => (
  <g>
    {mark && <rect x={x - 3} y={y - 14} width="21" height="18" fill={mark} />}
    <text x={x} y={y} fontFamily="Noto Sans, Open Sans, sans-serif" fontSize="14"
      fill={n === 25 ? "#555" : mark ? "#1d4e63" : "#111"}>{n}</text>
  </g>
);

const EngineDrawing = () => (
  <svg viewBox="762 193 567 401" role="img" aria-label="Engine suspension drawing">
    <DrawingLines />
    <DrawingLabel x={804} y={259} n={25} mark="#a6a6a6" />
    <DrawingLabel x={791} y={297} n={20} />
    <DrawingLabel x={818} y={393} n={10} mark="#8dc7de" />
    <DrawingLabel x={811} y={432} n={30} />
    <DrawingLabel x={1077} y={382} n={40} />
    <DrawingLabel x={1095} y={442} n={45} />
    <DrawingLabel x={1182} y={554} n={10} mark="#8dc7de" />
    <DrawingLabel x={1298} y={591} n={80} />
    <DrawingLabel x={1253} y={600} n={90} />
  </svg>
);

const ThumbDrawing = () => (
  <svg viewBox="693 97 790 554" aria-hidden="true">
    <g opacity="0.600">
      <DrawingLines />
      <path d="M806 254h14M790 292h14M818 388h14M812 427h14M1077 377h18M1095 437h18M1182 549h18M1298 586h14" stroke="#333" strokeWidth="5" />
    </g>
    <path d="M772 633h670" stroke="#a5cad8" strokeWidth="6" />
  </svg>
);

/* ---------- data ---------- */

const topFive = [
  "88 - 030 FRONT BUMPER",
  "33 - 030 STEERING KNUCKLE AND CONTROL ARM",
  "72 - 015 FRONT DOORS",
  "50 - 165 EXPANSION TANK,MOUNTING PARTS",
  "82 - 175 FRONT ILLUMINATION",
];

const groups = [
  { no: 21, name: "ATTACHMENT PARTS FOR UNITS", tall: true },
  { no: 24, name: "ENGINE SUSPENSION", active: true },
  { no: 27, name: "MB AUTOMATIC TRANSMISSION", tall: true },
  { no: 29, name: "PEDAL ASSEMBLY" },
];

const parts = [
  { pos: 10, number: "A 221 240 11 17", name: "ENGINE MOUNT", note: "Left front" },
  { pos: 10, number: "A 221 240 11 17", name: "ENGINE MOUNT", note: "Front right" },
];

const Search = ({ label, placeholder, accent, wide }: { label: string; placeholder?: string; accent?: boolean; wide?: boolean }) => (
  <SearchBox $accent={accent} $wide={wide} role="search" onSubmit={(e) => e.preventDefault()}>
    <button type="submit" aria-label="Search"><SmallGlass /></button>
    <input type="text" aria-label={label} placeholder={placeholder} />
    <button type="reset" aria-label="Clear"><ClearIcon /></button>
  </SearchBox>
);

export default function App() {
  return (
    <>
      <GlobalStyle />
      <TopStrip />
      <Header>
        <VehicleInfo>
          <div>Vehicle: C221054 (63W)</div>
          <div>S 280/300</div>
        </VehicleInfo>
        <HeaderTools>
          <WarningButton aria-label="Warnings"><WarningIcon /></WarningButton>
          <RaisedButton aria-label="Copy"><CopyOutline /></RaisedButton>
          <Search label="Model designation" placeholder="Model designation" accent />
          <CartAdd aria-label="Add to cart"><CartPlus /></CartAdd>
        </HeaderTools>
        <Language aria-label="Language" defaultValue="en"><option value="en">en</option></Language>
      </Header>

      <CrumbBar aria-label="Breadcrumb">
        <Crumbs>
          <li><a href="#pc">PC</a></li>
          <li><a href="#series">S 280/300</a></li>
          <li><a href="#vehicle">Vehicle: C221054</a><button aria-label="Copy vehicle"><CopySolid /></button></li>
          <li><a href="#63w">63W</a></li>
          <li><a href="#24">24 ENGINE SUSPENSION</a></li>
          <li><a href="#015">015 ENGINE SUSPENSION</a></li>
        </Crumbs>
        <CrumbTools>
          <IconButton aria-label="Zoom"><Magnifier w={24} h={32} sign="+" /></IconButton>
          <IconButton aria-label="Information"><InfoLetter /></IconButton>
          <IconButton aria-label="Filter"><FunnelIcon /></IconButton>
          <IconButton aria-label="Notes"><DocAlert /></IconButton>
          <IconButton aria-label="WIS"><FileLabel w={28} h={34} label="WIS" /></IconButton>
          <IconButton aria-label="Mail"><MailEdit /></IconButton>
          <MutedButton aria-label="Cart"><CartIcon /></MutedButton>
        </CrumbTools>
      </CrumbBar>

      <TabBar>
        <Tabs role="tablist">
          <Tab role="tab" aria-selected="true" $active>Vehicle</Tab>
          <Tab role="tab">Engine</Tab>
          <Tab role="tab">Automatic transmission</Tab>
          <Tab role="tab" aria-label="Paint and fluids" $icon><PaintIcon /></Tab>
          <Tab role="tab" aria-label="Standard parts" $icon><BoltsIcon /></Tab>
        </Tabs>
        <TabSearch><Search label="Search parts" wide /></TabSearch>
      </TabBar>

      <Workspace>
        <Sidebar>
          <SideHeading $tall>
            <h2>Top 5</h2>
            <IconButton aria-label="Collapse"><ChevronUp /></IconButton>
            <IconButton aria-label="Hide panel"><DoubleLeft /></IconButton>
          </SideHeading>
          <TopList>
            {topFive.map((t) => <li key={t}><a href="#top">{t}</a></li>)}
          </TopList>
          <SideHeading><h2>Main groups</h2></SideHeading>
          <GroupScroll>
            <GroupList>
              {groups.map((g) => (
                <GroupRow key={g.no} $tall={g.tall} $active={g.active}>
                  <a href="#group"><span>{g.no}</span><span>{g.name}</span></a>
                </GroupRow>
              ))}
            </GroupList>
            <ScrollTrack aria-hidden="true">
              <div><Triangle /><ScrollThumb /></div>
              <Triangle down />
            </ScrollTrack>
          </GroupScroll>
        </Sidebar>
        <Spacer />
        <Parts>
          <PartsHeader>
            <FilterInput aria-label="Position" />
            <FilterInput aria-label="Part number or name" $grow />
            <PartsTools>
              <IconButton aria-label="List"><ListIcon /></IconButton>
              <IconButton aria-label="Expand"><ExpandIcon /></IconButton>
              <IconButton aria-label="Copy list"><CopySolid /></IconButton>
            </PartsTools>
          </PartsHeader>
          {parts.map((p) => (
            <PartCard key={p.note}>
              <p>{p.pos}</p>
              <div>
                <p>{p.number}</p>
                <p>{p.name}</p>
                <p>{p.note}</p>
                <PartIcons>
                  <IconButton aria-label="Table"><GridIcon /></IconButton>
                  <IconButton aria-label="Codes"><KeyIcon /></IconButton>
                  <IconButton aria-label="Picture"><PictureIcon /></IconButton>
                  <IconButton aria-label="Details"><InfoCircle /></IconButton>
                </PartIcons>
              </div>
              <div>
                <p>Quantity: 1</p>
                <AddToCart aria-label="Add to cart"><CartIcon w={18} h={14} /></AddToCart>
              </div>
            </PartCard>
          ))}
        </Parts>
        <Spacer />
        <Viewer>
          <DrawingArea><EngineDrawing /></DrawingArea>
          <ViewerTools>
            <ToolButton $h={44} aria-label="Close window"><CloseWindow /></ToolButton>
            <ToolButton $h={44} $color="#0ba8e3" aria-label="Center"><TargetIcon /></ToolButton>
            <ToolButton $h={36} $color="#0ba8e3" aria-label="History"><HistoryIcon /></ToolButton>
            <ToolButton $h={52} $color="#000" aria-label="Unpin"><UnpinIcon /></ToolButton>
            <ToolButton $h={28} $color="#999" aria-label="Save SVG"><FileLabel w={22} h={26} label="SVG" /></ToolButton>
            <ToolButton $h={40} aria-label="Zoom in"><Magnifier w={18} h={24} sign="+" /></ToolButton>
            <input type="range" aria-label="Zoom level" min={0} max={100} defaultValue={20} />
            <ToolButton $h={48} $low aria-label="Zoom out"><Magnifier w={18} h={24} sign="-" /></ToolButton>
          </ViewerTools>
          <ImageId>Image ID: drawing_B24015000192</ImageId>
        </Viewer>
      </Workspace>

      <Sheets>
        <SheetTitle>
          015 ENGINE SUSPENSION
          <IconButton aria-label="Edit"><EditIcon /></IconButton>
        </SheetTitle>
        <SheetThumb aria-label="015 ENGINE SUSPENSION"><ThumbDrawing /></SheetThumb>
      </Sheets>
    </>
  );
}
